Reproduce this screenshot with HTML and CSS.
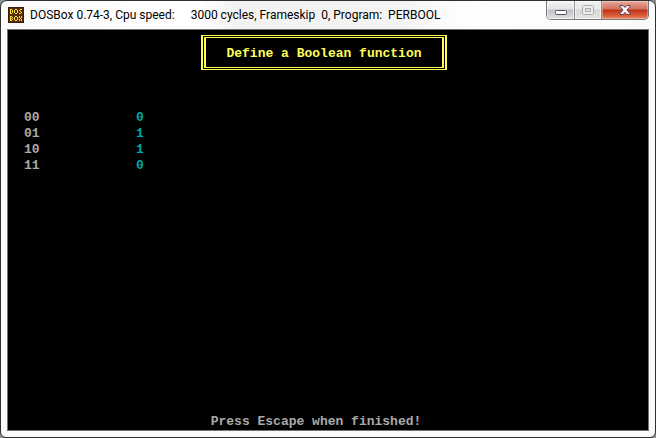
FILE: index.html
```html
<!DOCTYPE html>
<html lang="en">
<head>
<meta charset="utf-8">
<title>DOSBox 0.74-3</title>
<link rel="stylesheet" href="styles.css">
</head>
<body>
<div class="window">
  <header class="titlebar">
    <svg class="app-icon" viewBox="0 0 16 16" shape-rendering="crispEdges" aria-hidden="true">
      <rect width="16" height="16" fill="#3c1c08"/>
      <rect x="1" y="1" width="14" height="14" fill="#5a2c0c"/>
      <g fill="none" stroke="#f4e431" stroke-width="1">
        <path d="M2 2.500h2M2.500 2v5M2 6.500h2M4.500 3v3M7 2.500h2M7 6.500h2M6.500 3v3M9.500 3v3M12 2.500h2M11.500 3v1M12 4.500h1M13.500 5v1M11 6.500h2"/>
        <path d="M2 9.500h2M2.500 9v5M2 11.500h2M2 13.500h2M4.500 10v1M4.500 12v1M7 9.500h2M7 13.500h2M6.500 10v3M9.500 10v3M11.500 9v2M13.500 9v2M12 11.500h1M11.500 12v2M13.500 12v2"/>
      </g>
    </svg>
    <h1 class="caption"><span>DOSBox 0.74-3, Cpu speed:</span><span>3000 cycles, Frameskip&nbsp; 0, Program:&nbsp; PERBOOL</span></h1>
    <div class="controls">
      <button class="control" type="button" aria-label="Minimize">
        <svg width="12" height="5" viewBox="0 0 12 5"><rect x=".5" y=".5" width="11" height="4" rx="1" fill="#fff" stroke="#4c4d62"/></svg>
      </button>
      <button class="control maximize" type="button" aria-label="Maximize" disabled>
        <svg width="12" height="10" viewBox="0 0 12 10"><rect x=".5" y=".5" width="11" height="9" rx="1" fill="#ededed" stroke="#adadad"/><rect x="3.500" y="3.500" width="5" height="3" fill="#e0e0e0" stroke="#adadad"/></svg>
      </button>
      <button class="control close" type="button" aria-label="Close">
        <svg width="12" height="10" viewBox="0 0 12 10"><path d="M1 .5h3l2 2 2-2h3v1L8 5l3 3.500v1H8l-2-2-2 2H1v-1L4 5 1 1.500z" fill="#f5f5f7" stroke="#4c4358"/></svg>
      </button>
    </div>
  </header>
  <main class="screen">
    <h2 class="heading"><span>Define a Boolean function</span></h2>
    <table class="truth-table">
      <tbody>
        <tr><th scope="row">00</th><td>0</td></tr>
        <tr><th scope="row">01</th><td>1</td></tr>
        <tr><th scope="row">10</th><td>1</td></tr>
        <tr><th scope="row">11</th><td>0</td></tr>
      </tbody>
    </table>
    <p class="hint">Press Escape when finished!</p>
  </main>
</div>
</body>
</html>
```
FILE: styles.css
```css
* { box-sizing: border-box; }

body {
  margin: 0;
  background: #8b8f8d;
}

.window {
  display: flex;
  flex-direction: column;
  min-height: 100vh;
  padding: 0 6px 6px;
  border: 1px solid #303030;
  border-radius: 7px 7px 6px 6px;
  background: #fbfbfb;
}

.titlebar {
  display: flex;
  align-items: center;
  height: 28px;
  background: linear-gradient(90deg, #fafafa, #fff 20%, #fff 30%, #f2f2f2 36%, #f4f4f4 62%, #fff 72%, #fafafa);
}

.app-icon {
  width: 16px;
  height: 16px;
  margin-left: 1px;
}

.caption {
  display: flex;
  gap: 16px;
  flex: 1;
  margin: 0 0 0 6px;
  color: #000;
  font: 12px/16px "Segoe UI", Roboto, sans-serif;
  white-space: nowrap;
}

.controls {
  display: flex;
  align-self: flex-start;
  border: 1px solid #77777c;
  border-top: 0;
  border-radius: 0 0 5px 5px;
  overflow: hidden;
}

.control {
  display: flex;
  align-items: center;
  justify-content: center;
  width: 28px;
  height: 18px;
  padding: 4px 0 0;
  border: 0;
  border-right: 1px solid #8c8c90;
  background: linear-gradient(#f5f5f6, #e2e2e4 45%, #c2c2c6 50%, #e0e0e4);
  box-shadow: inset 0 0 0 1px #ffffff90;
}

.maximize {
  width: 27px;
  padding-top: 0;
  background: linear-gradient(#f2f2f2, #e6e6e6 45%, #d8d8d8 50%, #e6e6e6);
}

.close {
  width: 46px;
  padding-top: 0;
  border-right: 0;
  background: linear-gradient(#e8aa9c, #d4705c 45%, #bd3219 50%, #d95c39 80%, #e78b62);
  box-shadow: inset 0 0 0 1px #ffffff50;
}

.screen {
  display: flex;
  flex: 1;
  flex-direction: column;
  padding: 5px 16px 0;
  border: 1px solid #737373;
  background: #000;
  color: #aaa;
  font: bold 13px/16px "Liberation Mono", monospace;
}

.heading {
  align-self: center;
  margin: 0 8px 0 0;
  border: solid #ffff55;
  border-width: 1px 2px;
  padding: 1px;
  color: #ffff55;
  font: inherit;
}

.heading span {
  display: block;
  padding: 8px 20px 5px;
  border: solid #ffff55;
  border-width: 1px 2px;
}

.truth-table {
  align-self: flex-start;
  margin-top: 40px;
  border-collapse: collapse;
}

.truth-table th,
.truth-table td {
  padding: 0;
  font-weight: bold;
  text-align: left;
}

.truth-table th { width: 112px; }

.truth-table td { color: #00aaaa; }

.hint {
  margin: auto 24px 0 0;
  text-align: center;
}
```
